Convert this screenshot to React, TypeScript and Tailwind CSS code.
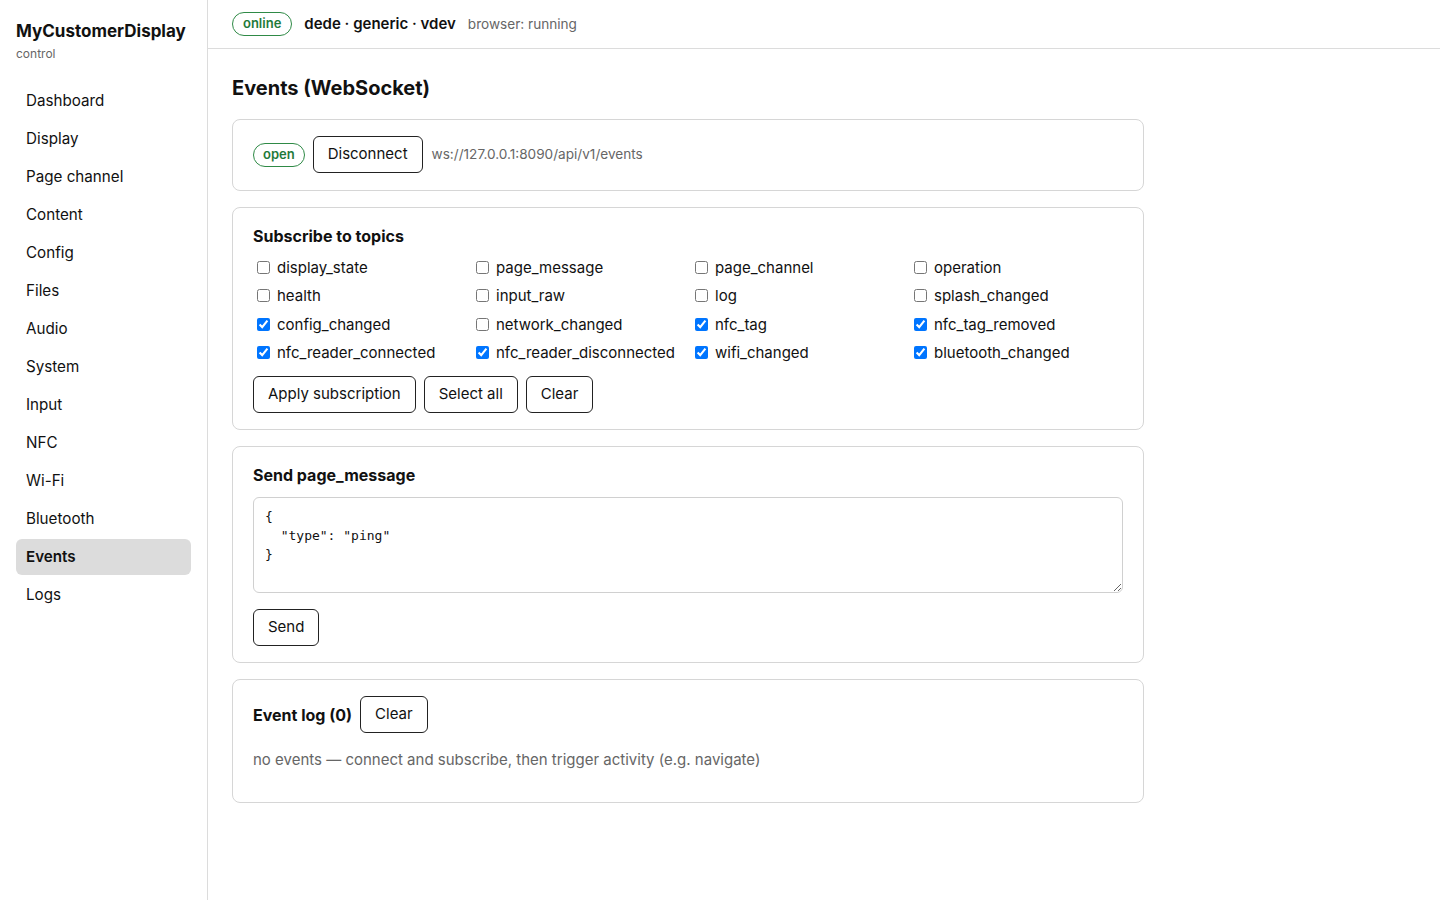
import React from "react";

const nav = ["Dashboard","Display","Page channel","Content","Config","Files","Audio","System","Input","NFC","Wi-Fi","Bluetooth","Events","Logs"];

const topics: [string, boolean][] = [
  ["display_state", false],["page_message", false],["page_channel", false],["operation", false],
  ["health", false],["input_raw", false],["log", false],["splash_changed", false],
  ["config_changed", true],["network_changed", false],["nfc_tag", true],["nfc_tag_removed", true],
  ["nfc_reader_connected", true],["nfc_reader_disconnected", true],["wifi_changed", true],["bluetooth_changed", true],
];

function Btn({ children }: { children: React.ReactNode }) {
  return (
    <button className="h-[37px] flex items-center border border-[#222] rounded-[6px] px-[14px] text-[15px] text-[#111] bg-white">
      {children}
    </button>
  );
}

function Card({ children, className = "" }: { children: React.ReactNode; className?: string }) {
  return (
    <div className={"border border-[#d6d6d6] rounded-[8px] px-5 pt-4 bg-white " + className}>{children}</div>
  );
}

export default function App() {
  return (
    <div className="flex min-h-[900px] bg-white text-[#111]" style={{ fontFamily: "Inter, 'Noto Sans', sans-serif" }}>
      <aside className="w-[208px] shrink-0 border-r border-[#dcdcdc] px-4 pt-[19px]">
        <div className="text-[17px] font-bold leading-6">MyCustomerDisplay</div>
        <div className="text-[12px] text-[#666] leading-4 mt-[3px]">control</div>
        <nav className="mt-[21px] flex flex-col gap-[2px]">
          {nav.map((n) => (
            <div
              key={n}
              className={
                "h-9 flex items-center px-[10px] rounded-[6px] text-[15.2px] " +
                (n === "Events" ? "bg-[#dcdcdc] font-semibold" : "")
              }
            >
              {n}
            </div>
          ))}
        </nav>
      </aside>
      <div className="flex-1 flex flex-col">
        <header className="h-[49px] border-b border-[#dcdcdc] flex items-center px-6 gap-3">
          <span className="h-6 flex items-center px-[10px] rounded-full border border-[#2f8a46] text-[#1f7a3a] text-[13px] font-semibold">online</span>
          <span className="text-[15px] font-semibold">dede · generic · vdev</span>
          <span className="text-[13.6px] text-[#666]">browser: running</span>
        </header>
        <main className="px-6">
          <h1 className="text-[20px] font-bold leading-7 mt-[25px] mb-[17px]">Events (WebSocket)</h1>
          <div className="w-[912px] flex flex-col gap-4">
            <Card className="pb-[17px]">
              <div className="flex items-center gap-2">
                <span className="h-6 flex items-center px-[9px] rounded-full border border-[#2f8a46] text-[#1f7a3a] text-[13px] font-semibold">open</span>
                <Btn>Disconnect</Btn>
                <span className="text-[13.6px] text-[#666] ml-px">ws://127.0.0.1:8090/api/v1/events</span>
              </div>
            </Card>
            <Card className="pb-4">
              <h3 className="text-[16px] font-bold leading-6 mb-[9px]">Subscribe to topics</h3>
              <div className="grid grid-cols-4 gap-x-[6px] gap-y-[7.4px]">
                {topics.map(([t, c]) => (
                  <label key={t} className="flex items-center gap-[7px] text-[15px] leading-[21px]">
                    <input type="checkbox" defaultChecked={c} className="m-0 ml-1 w-[13px] h-[13px]" />
                    <span>{t}</span>
                  </label>
                ))}
              </div>
              <div className="flex gap-2 mt-[13px]">
                <Btn>Apply subscription</Btn>
                <Btn>Select all</Btn>
                <Btn>Clear</Btn>
              </div>
            </Card>
            <Card className="pb-4">
              <h3 className="text-[16px] font-bold leading-6 mb-[10px]">Send page_message</h3>
              <textarea
                className="block w-full h-[96px] border border-[#d0d0d0] rounded-[6px] px-[11px] py-[9px] text-[13px] leading-[19px] text-[#111]"
                style={{ fontFamily: "'DejaVu Sans Mono', monospace" }}
                defaultValue={'{\n  "type": "ping"\n}'}
              />
              <div className="mt-4">
                <Btn>Send</Btn>
              </div>
            </Card>
            <Card className="pb-4">
              <div className="flex items-center gap-2">
                <h3 className="text-[16px] font-bold leading-6">Event log (0)</h3>
                <Btn>Clear</Btn>
              </div>
              <p className="text-[15px] text-[#666] leading-[21px] mt-4 mb-4">
                no events — connect and subscribe, then trigger activity (e.g. navigate)
              </p>
            </Card>
          </div>
        </main>
      </div>
    </div>
  );
}
